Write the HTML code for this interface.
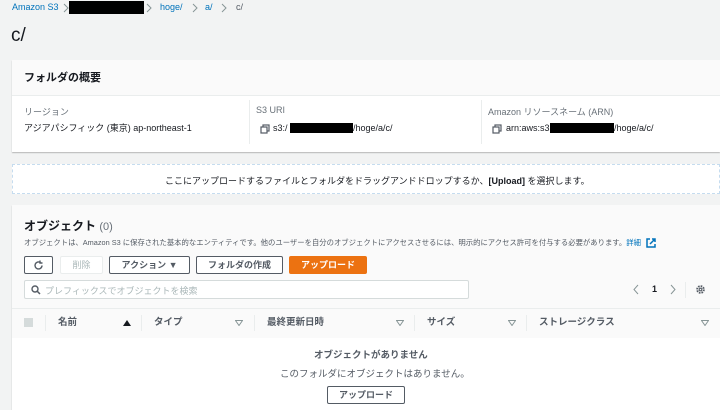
<!DOCTYPE html>
<html><head><meta charset="utf-8"><style>
*{box-sizing:border-box;margin:0;padding:0}
body{width:720px;height:410px;overflow:hidden;background:#f2f3f3;font-family:"Liberation Sans","Noto Sans CJK JP",sans-serif;color:#16191f;position:relative;font-size:9px}
.a{position:absolute;white-space:nowrap}
.lnk{color:#0073bb}
.black{background:#000;position:absolute}
.btn{position:absolute;height:18px;border:1px solid #545b64;border-radius:2px;background:#fff;font-weight:bold;font-size:9px;color:#545b64;text-align:center;line-height:16px}
.th{position:absolute;top:308px;height:30px;line-height:30px;font-weight:bold;font-size:9.5px;color:#545b64}
.sep{position:absolute;top:315px;width:1px;height:16px;background:#eaeded}
.tri{position:absolute;top:319px}
.chev{position:absolute;top:3px}
.cp{position:absolute}
</style></head><body>
<div class="a lnk" style="left:12px;top:2px;font-size:9px">Amazon S3</div>
<svg class="chev" style="left:63px" width="6" height="10"><path d="M1 1l4 4-4 4" stroke="#879596" fill="none"/></svg>
<div class="black" style="left:69px;top:1px;width:75px;height:13px"></div>
<svg class="chev" style="left:146px" width="6" height="10"><path d="M1 1l4 4-4 4" stroke="#879596" fill="none"/></svg>
<div class="a lnk" style="left:160px;top:2px">hoge/</div>
<svg class="chev" style="left:192px" width="6" height="10"><path d="M1 1l4 4-4 4" stroke="#879596" fill="none"/></svg>
<div class="a lnk" style="left:205px;top:2px">a/</div>
<svg class="chev" style="left:221px" width="6" height="10"><path d="M1 1l4 4-4 4" stroke="#879596" fill="none"/></svg>
<div class="a" style="left:236px;top:2px;color:#545b64">c/</div>
<div class="a" style="left:11px;top:25px;font-size:19px">c/</div>

<div style="position:absolute;left:12px;top:60px;width:708px;height:92px;background:#fff;box-shadow:0 1px 1px rgba(0,0,0,.25)">
 <div style="height:36px;background:#fafafa;border-bottom:1px solid #eaeded"></div>
</div>
<div class="a" style="left:24px;top:69px;font-size:11px;font-weight:bold">フォルダの概要</div>
<div style="position:absolute;left:249px;top:100px;width:1px;height:44px;background:#eaeded"></div>
<div style="position:absolute;left:481px;top:100px;width:1px;height:44px;background:#eaeded"></div>
<div class="a" style="left:24px;top:105px;color:#687078">リージョン</div>
<div class="a" style="left:24px;top:121px;color:#16191f">アジアパシフィック (東京) ap-northeast-1</div>
<div class="a" style="left:256px;top:105px;color:#687078">S3 URI</div>
<svg class="cp" style="left:260px;top:124px" width="10" height="10"><rect x="3" y="1" width="6" height="6" fill="none" stroke="#545b64" stroke-width="1.2"/><rect x="1" y="3" width="6" height="6" fill="#fff" stroke="#545b64" stroke-width="1.2"/></svg>
<div class="a" style="left:273px;top:123px">s3:/</div>
<div class="black" style="left:290px;top:123px;width:63px;height:10px"></div>
<div class="a" style="left:353px;top:123px">/hoge/a/c/</div>
<div class="a" style="left:488px;top:105px;color:#687078">Amazon リソースネーム (ARN)</div>
<svg class="cp" style="left:492px;top:124px" width="10" height="10"><rect x="3" y="1" width="6" height="6" fill="none" stroke="#545b64" stroke-width="1.2"/><rect x="1" y="3" width="6" height="6" fill="#fff" stroke="#545b64" stroke-width="1.2"/></svg>
<div class="a" style="left:506px;top:123px">arn:aws:s3::</div>
<div class="black" style="left:550px;top:123px;width:64px;height:10px"></div>
<div class="a" style="left:614px;top:123px">/hoge/a/c/</div>

<div style="position:absolute;left:12px;top:164px;width:708px;height:30px;background:#fff;border:1px dashed #c5dcef"></div>
<div class="a" style="left:165px;top:174px">ここにアップロードするファイルとフォルダをドラッグアンドドロップするか、<b>[Upload]</b> を選択します。</div>

<div style="position:absolute;left:12px;top:205px;width:708px;height:205px;background:#fafafa;box-shadow:0 1px 1px rgba(0,0,0,.25)">
 <div style="position:absolute;left:0;top:103px;width:708px;height:30px;background:#fafafa;border-top:1px solid #eaeded"></div>
 <div style="position:absolute;left:0;top:133px;width:708px;height:72px;background:#fff"></div>
</div>
<div class="a" style="left:24px;top:217px;font-size:12px;font-weight:bold">オブジェクト <span style="font-weight:normal;color:#687078;font-size:11px">(0)</span></div>
<div class="a" style="left:24px;top:237px;font-size:7.35px;color:#545b64">オブジェクトは、Amazon S3 に保存された基本的なエンティティです。他のユーザーを自分のオブジェクトにアクセスさせるには、明示的にアクセス許可を付与する必要があります。<span class="lnk">詳細</span></div>
<svg class="cp" style="left:646px;top:238px" width="10" height="10"><path d="M4 1H1v8h8V6M6 1h3v3M9 1L4 6" fill="none" stroke="#0073bb" stroke-width="1.5"/></svg>
<div class="btn" style="left:24px;top:256px;width:29px"><svg width="11" height="11" style="margin-top:3px"><path d="M9 5.5A3.5 3.5 0 1 1 7.5 2.6M7 0.5v2.5h2.5" fill="none" stroke="#545b64" stroke-width="1.4"/></svg></div>
<div class="btn" style="left:60px;top:256px;width:43px;border-color:#eaeded;color:#aab7b8;font-weight:normal">削除</div>
<div class="btn" style="left:109px;top:256px;width:81px">アクション ▼</div>
<div class="btn" style="left:196px;top:256px;width:87px">フォルダの作成</div>
<div class="btn" style="left:289px;top:256px;width:78px;background:#ec7211;border-color:#ec7211;color:#fff">アップロード</div>
<div style="position:absolute;left:24px;top:280px;width:445px;height:19px;background:#fff;border:1px solid #d5dbdb;border-radius:2px"></div>
<svg class="cp" style="left:31px;top:285px" width="10" height="10"><circle cx="4" cy="4" r="3" fill="none" stroke="#545b64" stroke-width="1.4"/><path d="M6.3 6.3L9 9" stroke="#545b64" stroke-width="1.5"/></svg>
<div class="a" style="left:45px;top:284px;color:#aab7b8">プレフィックスでオブジェクトを検索</div>
<svg class="cp" style="left:633px;top:284px" width="6" height="11"><path d="M5 1L1 5.5 5 10" stroke="#879596" fill="none"/></svg>
<div class="a" style="left:652px;top:284px;font-weight:bold">1</div>
<svg class="cp" style="left:670px;top:284px" width="6" height="11"><path d="M1 1l4 4.5L1 10" stroke="#879596" fill="none"/></svg>
<div style="position:absolute;left:685px;top:282px;width:1px;height:16px;background:#eaeded"></div>
<svg class="cp" style="left:695px;top:284px" width="11" height="11"><circle cx="5.5" cy="5.5" r="3.3" fill="none" stroke="#545b64" stroke-width="2" stroke-dasharray="1.6 1"/><circle cx="5.5" cy="5.5" r="1.3" fill="none" stroke="#545b64"/></svg>

<div style="position:absolute;left:24px;top:318px;width:9px;height:9px;background:#d5dbdb"></div>
<div class="sep" style="left:45px"></div>
<div class="th" style="left:58px">名前</div>
<svg class="tri" style="left:123px;top:320px" width="8" height="6"><path d="M0 6L4 0 8 6z" fill="#16191f"/></svg>
<div class="sep" style="left:141px"></div>
<div class="th" style="left:154px">タイプ</div>
<svg class="tri" style="left:235px;top:320px" width="8" height="6"><path d="M0.5 0.5h7L4 5.5z" fill="none" stroke="#879596"/></svg>
<div class="sep" style="left:254px"></div>
<div class="th" style="left:267px">最終更新日時</div>
<svg class="tri" style="left:396px;top:320px" width="8" height="6"><path d="M0.5 0.5h7L4 5.5z" fill="none" stroke="#879596"/></svg>
<div class="sep" style="left:414px"></div>
<div class="th" style="left:427px">サイズ</div>
<svg class="tri" style="left:508px;top:320px" width="8" height="6"><path d="M0.5 0.5h7L4 5.5z" fill="none" stroke="#879596"/></svg>
<div class="sep" style="left:526px"></div>
<div class="th" style="left:539px">ストレージクラス</div>
<svg class="tri" style="left:701px;top:320px" width="8" height="6"><path d="M0.5 0.5h7L4 5.5z" fill="none" stroke="#879596"/></svg>

<div class="a" style="left:314px;top:347px;font-weight:bold;color:#545b64;font-size:9.5px">オブジェクトがありません</div>
<div class="a" style="left:280px;top:366px;color:#545b64;font-size:9.5px">このフォルダにオブジェクトはありません。</div>
<div class="btn" style="left:327px;top:386px;width:78px">アップロード</div>
</body></html>
